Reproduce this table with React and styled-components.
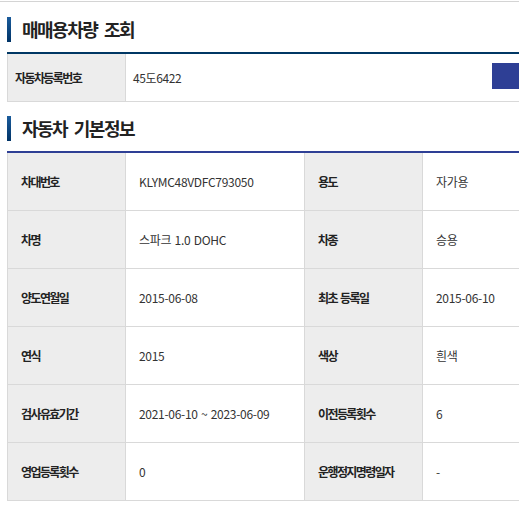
import React from "react";
import styled, { createGlobalStyle } from "styled-components";

const GlobalStyle = createGlobalStyle`
  *, *::before, *::after {
    box-sizing: border-box;
  }
  html, body {
    margin: 0;
    padding: 0;
    background: #fff;
  }
  body {
    font-family: "Noto Sans CJK KR", "Noto Sans", sans-serif;
    color: #333;
  }
`;

export default function App() {
  const rows = [
    ["차대번호", "KLYMC48VDFC793050", "용도", "자가용"],
    ["차명", "스파크 1.0 DOHC", "차종", "승용"],
    ["양도연월일", "2015-06-08", "최초 등록일", "2015-06-10"],
    ["연식", "2015", "색상", "흰색"],
    ["검사유효기간", "2021-06-10 ~ 2023-06-09", "이전등록횟수", "6"],
    ["영업등록횟수", "0", "운행정지명령일자", "-"]
  ];

  return (
    <>
      <GlobalStyle />
      <Page>
        <Section>
          <Title>매매용차량 조회</Title>
          <SearchTable>
            <SearchLabel>자동차등록번호</SearchLabel>
            <SearchValue>
              <span>45도6422</span>
              <SearchButton type="button" aria-label="조회" />
            </SearchValue>
          </SearchTable>
        </Section>
        <Section>
          <Title>자동차 기본정보</Title>
          <InfoTable>
            {rows.map((row, index) => (
              <InfoRow key={index}>
                <InfoLabel>{row[0]}</InfoLabel>
                <InfoValue>{row[1]}</InfoValue>
                <InfoLabel>{row[2]}</InfoLabel>
                <InfoValue>{row[3]}</InfoValue>
              </InfoRow>
            ))}
          </InfoTable>
        </Section>
      </Page>
    </>
  );
}

const Page = styled.div`
  margin-top: 1px;
  border-top: 1px solid #d4d4d4;
  padding: 0 0 0 7px;
  width: 100%;
  overflow: hidden;
`;

const Section = styled.section`
  padding-top: 15px;

  & + & {
    padding-top: 14px;
  }
`;

const Title = styled.h2`
  position: relative;
  margin: 0 0 10px;
  padding-left: 15px;
  height: 25px;
  line-height: 25px;
  font-size: 18px;
  font-weight: 700;
  color: #222;
  letter-spacing: -1.5px;
  word-spacing: 4px;

  &::before {
    content: "";
    position: absolute;
    left: 0;
    top: 0;
    width: 4px;
    height: 25px;
    background: linear-gradient(to bottom, #1b5c9c, #003366);
  }
`;

const SearchTable = styled.div`
  display: grid;
  grid-template-columns: 119px 1fr;
  border-top: 2px solid #003764;
  border-bottom: 1px solid #d9d9d9;
  height: 50px;
`;

const SearchLabel = styled.div`
  display: flex;
  align-items: center;
  padding-left: 7px;
  background: #ededed;
  border-left: 1px solid #d9d9d9;
  border-right: 1px solid #d9d9d9;
  font-size: 12px;
  font-weight: 700;
  color: #222;
  letter-spacing: -1.6px;
`;

const SearchValue = styled.div`
  display: flex;
  align-items: center;
  padding-left: 7px;
  font-size: 12px;
  color: #333;
  letter-spacing: -0.4px;

  span {
    flex: 1;
  }
`;

const SearchButton = styled.button`
  margin: -3px 0 0 0;
  width: 27px;
  height: 26px;
  border: 0;
  padding: 0;
  background: #2e3f95;
`;

const InfoTable = styled.div`
  border-top: 2px solid #2e3f95;
`;

const InfoRow = styled.div`
  display: grid;
  grid-template-columns: 119px 178px 119px 1fr;
  height: 58px;
  border-bottom: 1px solid #d9d9d9;
`;

const InfoLabel = styled.div`
  display: flex;
  align-items: center;
  padding-left: 13px;
  background: #ededed;
  border-left: 1px solid #d9d9d9;
  border-right: 1px solid #d9d9d9;
  font-size: 12px;
  font-weight: 700;
  color: #222;
  letter-spacing: -1.6px;
  word-spacing: 2px;
`;

const InfoValue = styled.div`
  display: flex;
  align-items: center;
  padding-left: 13px;
  font-size: 12px;
  color: #333;
  letter-spacing: -0.3px;
  word-spacing: 1px;
`;
